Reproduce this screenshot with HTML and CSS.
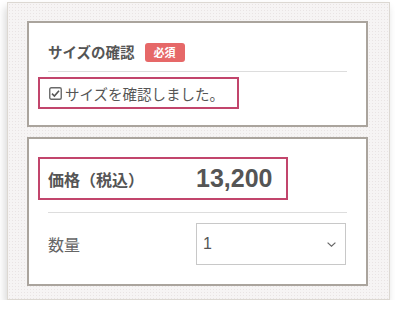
FILE: index.html
```html
<!DOCTYPE html>
<html lang="ja">
<head>
  <meta charset="UTF-8" />
  <meta name="viewport" content="width=device-width, initial-scale=1.0" />
  <title>サイズの確認</title>
  <link rel="stylesheet" href="styles.css">
</head>
<body>
  <div class="panel">
    <div class="card">
      <div class="card-head">
        <h3>サイズの確認</h3>
        <span class="badge">必須</span>
      </div>
      <label class="confirm-box">
        <svg class="check-icon" width="13" height="13" viewBox="0 0 13 13">
          <rect x="0.75" y="0.75" width="11.5" height="11.5" rx="1.5" fill="#fff" stroke="#6a6a6a" stroke-width="1.4"/>
          <path d="M3 6.6 L5.4 9 L10 3.8" fill="none" stroke="#555" stroke-width="1.6"/>
        </svg>
        <span>サイズを確認しました。</span>
      </label>
    </div>

    <div class="card card-price">
      <div class="price-box">
        <span class="price-label">価格（税込）</span>
        <span class="price-value">13,200</span>
      </div>
      <div class="divider"></div>
      <div class="qty-row">
        <span class="qty-label">数量</span>
        <div class="select-box">
          <span>1</span>
          <svg width="9" height="5" viewBox="0 0 9 5">
            <path d="M0.6 0.6 L4.5 4.2 L8.4 0.6" fill="none" stroke="#666" stroke-width="1.2"/>
          </svg>
        </div>
      </div>
    </div>
  </div>
</body>
</html>
```

FILE: styles.css
```css
body {
  margin: 0;
  background: #fff;
  font-family: "Noto Sans CJK JP", "Liberation Sans", sans-serif;
  color: #555;
}
.panel {
  width: 383px;
  box-sizing: border-box;
  margin: 2px 0 0 7px;
  padding: 18px 21px 13px 19px;
  border: 1px solid #dcd8d2;
  background-color: #f6f4f4;
  background-image: radial-gradient(circle, #e9e4e4 0.8px, transparent 1px);
  background-size: 3px 3px;
  box-shadow: -2px 5px 8px rgba(0, 0, 0, 0.16);
  display: flex;
  flex-direction: column;
  gap: 10px;
}
.card {
  background: #fff;
  border: 2px solid #aaa49d;
  padding: 19px 19px 16px 19px;
}
.card-head {
  display: flex;
  align-items: center;
  height: 20px;
  padding-bottom: 9px;
  border-bottom: 1px solid #ddd;
  margin-bottom: 5px;
}
.card-head h3 {
  margin: 0;
  font-size: 14.5px;
  font-weight: bold;
  color: #555;
  line-height: 20px;
}
.badge {
  margin-left: 10px;
  width: 40px;
  height: 19px;
  border-radius: 3px;
  background: #e66868;
  color: #fff;
  font-size: 11px;
  font-weight: bold;
  line-height: 19px;
  text-align: center;
}
.confirm-box {
  display: flex;
  align-items: center;
  gap: 3px;
  width: 201px;
  height: 32px;
  box-sizing: border-box;
  margin-left: -10px;
  padding-left: 9px;
  border: 2px solid #c2456c;
  font-size: 14.5px;
  color: #555;
}
.check-icon {
  flex: none;
}
.card-price {
  padding: 18px 19px 19px 19px;
}
.price-box {
  display: flex;
  align-items: center;
  width: 250px;
  height: 43px;
  box-sizing: border-box;
  margin-left: -10px;
  padding-left: 8px;
  border: 2px solid #c2456c;
}
.price-label {
  width: 148px;
  font-size: 16px;
  font-weight: bold;
  color: #555;
}
.price-value {
  font-family: "Liberation Sans", sans-serif;
  font-size: 25px;
  font-weight: bold;
  color: #555;
}
.divider {
  height: 1px;
  background: #ddd;
  margin: 12px 0 10px 0;
}
.qty-row {
  display: flex;
  align-items: center;
}
.qty-label {
  width: 148px;
  font-size: 16px;
  color: #666;
}
.select-box {
  display: flex;
  align-items: center;
  justify-content: space-between;
  width: 150px;
  height: 42px;
  box-sizing: border-box;
  padding: 0 9px 0 6px;
  border: 1px solid #c8c8c8;
  font-family: "Liberation Sans", sans-serif;
  font-size: 16px;
  color: #555;
}
```
